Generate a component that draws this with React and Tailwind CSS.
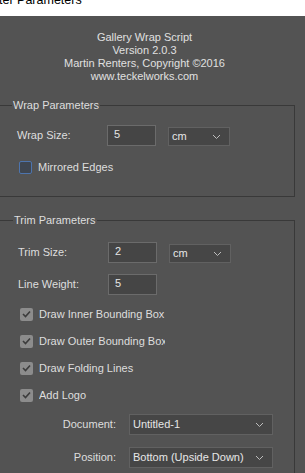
import React from "react";

const Chevron = () => (
    <svg width="9" height="6" viewBox="0 0 9 6" className="shrink-0">
        <polyline points="1,1 4.5,4.5 8,1" fill="none" stroke="#bdbdbd" strokeWidth="1" />
    </svg>
);

const TextBox = ({ value }) => (
    <div className="w-[49px] h-[21px] bg-[#454545] border border-[#6b6b6b] pl-[6px] leading-[17px] text-[#e6e6e6]">
        {value}
    </div>
);

const Select = ({ value, width, height = "h-[19px]" }) => (
    <div className={`${width} ${height} bg-[#464646] border border-[#616161] flex items-center justify-between pl-[3px] pr-[8px] text-[#e6e6e6] whitespace-nowrap`}>
        <span>{value}</span>
        <Chevron />
    </div>
);

const CheckBox = ({ checked, label }) => (
    <div className="flex items-center h-[14px]">
        {checked ? (
            <div className="w-[13px] h-[13px] rounded-[2px] bg-[#8c8c8c] flex items-center justify-center shrink-0">
                <svg width="9" height="8" viewBox="0 0 9 8">
                    <polyline points="1,4 3.5,6.5 8,1.5" fill="none" stroke="#3c3c3c" strokeWidth="1.6" />
                </svg>
            </div>
        ) : (
            <div className="w-[13px] h-[13px] rounded-[2px] border border-[#4d74ad] bg-[#3f4650] shrink-0" />
        )}
        {/* the dialog clips long labels at a fixed width */}
        <span className="ml-[6px] w-[126px] overflow-hidden whitespace-nowrap leading-[16px]">{label}</span>
    </div>
);

export default function App() {
    return (
        <div
            className="w-[305px] h-[473px] overflow-hidden bg-[#535353] text-[11px] text-[#dedede]"
            style={{ fontFamily: "'Liberation Sans', Arial, sans-serif" }}
        >
            {/* window title strip */}
            <div className="h-[16px] bg-white overflow-hidden">
                <div className="-mt-[8px] -ml-[1px] text-[12.5px] leading-[16px] text-black">ter Parameters</div>
            </div>

            <div className="w-[289px] pt-[15px] text-center leading-[13px] text-[#e0e0e0]">
                <div>Gallery Wrap Script</div>
                <div>Version 2.0.3</div>
                <div>Martin Renters, Copyright ©2016</div>
                <div>www.teckelworks.com</div>
            </div>

            {/* Wrap Parameters */}
            <fieldset className="mt-[14px] -ml-[4px] w-[299px] h-[100px] border border-[#393939] pl-[15px] pr-0 pb-0">
                <legend className="px-[1px] leading-[16px]">Wrap Parameters</legend>
                <div className="flex items-center mt-[12px] ml-[5px]">
                    <span className="w-[90px]">Wrap Size:</span>
                    <TextBox value="5" />
                    <div className="ml-[12px] mt-[2px]">
                        <Select value="cm" width="w-[62px]" />
                    </div>
                </div>
                <div className="mt-[14px] ml-[7px]">
                    <CheckBox checked={false} label="Mirrored Edges" />
                </div>
            </fieldset>

            {/* Trim Parameters */}
            <fieldset className="mt-[15px] -ml-[4px] w-[299px] h-[300px] border border-[#393939] pl-[16px] pr-0 pb-0">
                <legend className="px-[1px] leading-[16px]">Trim Parameters</legend>
                <div className="flex items-center mt-[14px] ml-[5px]">
                    <span className="w-[90px]">Trim Size:</span>
                    <TextBox value="2" />
                    <div className="ml-[12px] mt-[2px]">
                        <Select value="cm" width="w-[62px]" />
                    </div>
                </div>
                <div className="flex items-center mt-[11px] ml-[5px]">
                    <span className="w-[90px]">Line Weight:</span>
                    <TextBox value="5" />
                </div>
                <div className="mt-[12px] ml-[7px] flex flex-col gap-[13px]">
                    <CheckBox checked label="Draw Inner Bounding Box" />
                    <CheckBox checked label="Draw Outer Bounding Box" />
                    <CheckBox checked label="Draw Folding Lines" />
                    <CheckBox checked label="Add Logo" />
                </div>
                <div className="mt-[12px] flex flex-col gap-[12px]">
                    <div className="flex items-center">
                        <span className="w-[103px] text-right">Document:</span>
                        <div className="ml-[13px]">
                            <Select value="Untitled-1" width="w-[144px]" height="h-[21px]" />
                        </div>
                    </div>
                    <div className="flex items-center">
                        <span className="w-[103px] text-right">Position:</span>
                        <div className="ml-[13px]">
                            <Select value="Bottom (Upside Down)" width="w-[144px]" height="h-[21px]" />
                        </div>
                    </div>
                </div>
            </fieldset>
        </div>
    );
}
